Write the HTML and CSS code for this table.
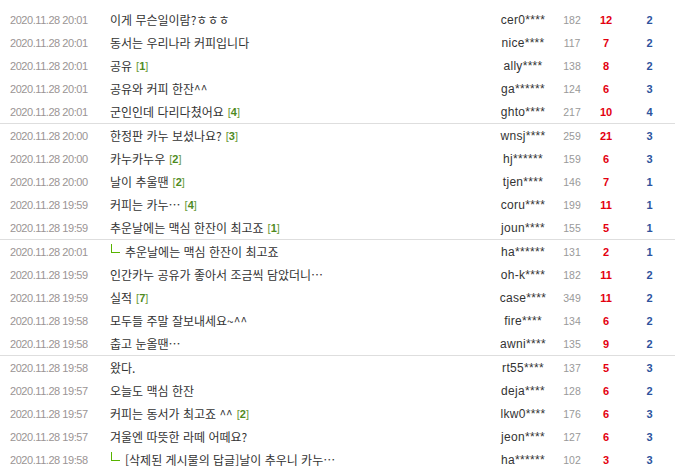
FILE: index.html
```html
<!DOCTYPE html>
<html lang="ko">
<head>
<meta charset="utf-8">
<link rel="stylesheet" href="styles.css">
</head>
<body>
<div class="list">
  <div class="group">
    <div class="row"><span class="date">2020.11.28 20:01</span><span class="title">이게 무슨일이람?ㅎㅎㅎ</span><span class="nick">cer0****</span><span class="hit">182</span><span class="red">12</span><span class="blue">2</span></div>
    <div class="row"><span class="date">2020.11.28 20:01</span><span class="title">동서는 우리나라 커피입니다</span><span class="nick">nice****</span><span class="hit">117</span><span class="red">7</span><span class="blue">2</span></div>
    <div class="row"><span class="date">2020.11.28 20:01</span><span class="title">공유 <span class="cmt">[<b>1</b>]</span></span><span class="nick">ally****</span><span class="hit">138</span><span class="red">8</span><span class="blue">2</span></div>
    <div class="row"><span class="date">2020.11.28 20:01</span><span class="title">공유와 커피 한잔^^</span><span class="nick">ga******</span><span class="hit">124</span><span class="red">6</span><span class="blue">3</span></div>
    <div class="row"><span class="date">2020.11.28 20:01</span><span class="title">군인인데 다리다쳤어요 <span class="cmt">[<b>4</b>]</span></span><span class="nick">ghto****</span><span class="hit">217</span><span class="red">10</span><span class="blue">4</span></div>
  </div>
  <div class="group">
    <div class="row"><span class="date">2020.11.28 20:00</span><span class="title">한정판 카누 보셨나요? <span class="cmt">[<b>3</b>]</span></span><span class="nick">wnsj****</span><span class="hit">259</span><span class="red">21</span><span class="blue">3</span></div>
    <div class="row"><span class="date">2020.11.28 20:00</span><span class="title">카누카누우 <span class="cmt">[<b>2</b>]</span></span><span class="nick">hj******</span><span class="hit">159</span><span class="red">6</span><span class="blue">3</span></div>
    <div class="row"><span class="date">2020.11.28 20:00</span><span class="title">날이 추울땐 <span class="cmt">[<b>2</b>]</span></span><span class="nick">tjen****</span><span class="hit">146</span><span class="red">7</span><span class="blue">1</span></div>
    <div class="row"><span class="date">2020.11.28 19:59</span><span class="title">커피는 카누… <span class="cmt">[<b>4</b>]</span></span><span class="nick">coru****</span><span class="hit">199</span><span class="red">11</span><span class="blue">1</span></div>
    <div class="row"><span class="date">2020.11.28 19:59</span><span class="title">추운날에는 맥심 한잔이 최고죠 <span class="cmt">[<b>1</b>]</span></span><span class="nick">joun****</span><span class="hit">155</span><span class="red">5</span><span class="blue">1</span></div>
  </div>
  <div class="group">
    <div class="row"><span class="date">2020.11.28 20:01</span><span class="title"><i class="re"></i>추운날에는 맥심 한잔이 최고죠</span><span class="nick">ha******</span><span class="hit">131</span><span class="red">2</span><span class="blue">1</span></div>
    <div class="row"><span class="date">2020.11.28 19:59</span><span class="title">인간카누 공유가 좋아서 조금씩 담았더니…</span><span class="nick">oh-k****</span><span class="hit">182</span><span class="red">11</span><span class="blue">2</span></div>
    <div class="row"><span class="date">2020.11.28 19:59</span><span class="title">실적 <span class="cmt">[<b>7</b>]</span></span><span class="nick">case****</span><span class="hit">349</span><span class="red">11</span><span class="blue">2</span></div>
    <div class="row"><span class="date">2020.11.28 19:58</span><span class="title">모두들 주말 잘보내세요~^^</span><span class="nick">fire****</span><span class="hit">134</span><span class="red">6</span><span class="blue">2</span></div>
    <div class="row"><span class="date">2020.11.28 19:58</span><span class="title">춥고 눈올땐…</span><span class="nick">awni****</span><span class="hit">135</span><span class="red">9</span><span class="blue">2</span></div>
  </div>
  <div class="group">
    <div class="row"><span class="date">2020.11.28 19:58</span><span class="title">왔다.</span><span class="nick">rt55****</span><span class="hit">137</span><span class="red">5</span><span class="blue">3</span></div>
    <div class="row"><span class="date">2020.11.28 19:57</span><span class="title">오늘도 맥심 한잔</span><span class="nick">deja****</span><span class="hit">128</span><span class="red">6</span><span class="blue">2</span></div>
    <div class="row"><span class="date">2020.11.28 19:57</span><span class="title">커피는 동서가 최고죠 ^^ <span class="cmt">[<b>2</b>]</span></span><span class="nick">lkw0****</span><span class="hit">176</span><span class="red">6</span><span class="blue">3</span></div>
    <div class="row"><span class="date">2020.11.28 19:57</span><span class="title">겨울엔 따뜻한 라떼 어떼요?</span><span class="nick">jeon****</span><span class="hit">127</span><span class="red">6</span><span class="blue">3</span></div>
    <div class="row"><span class="date">2020.11.28 19:58</span><span class="title"><i class="re"></i>[삭제된 게시물의 답글]날이 추우니 카누…</span><span class="nick">ha******</span><span class="hit">102</span><span class="red">3</span><span class="blue">3</span></div>
  </div>
</div>
</body>
</html>
```

FILE: styles.css
```css
html, body {
  margin: 0;
  padding: 0;
  background: #fff;
}
body {
  font-family: "Liberation Sans", Arial, "Noto Sans CJK KR", sans-serif;
  color: #333;
}
.list {
  width: 675px;
  padding-top: 8px;
}
.group {
  border-bottom: 1px solid #dedede;
}
.group:last-child {
  border-bottom: none;
}
.row {
  display: grid;
  grid-template-columns: 110px 380px 66px 32px 36px 51px;
  height: 23px;
  align-items: center;
  white-space: nowrap;
}
.date {
  padding-left: 10px;
  font-size: 11px;
  letter-spacing: -0.45px;
  color: #9a9494;
}
.title {
  font-family: "Noto Sans CJK KR", sans-serif;
  font-size: 12px;
  color: #333;
  display: flex;
  align-items: center;
}
.cmt {
  font-family: "Liberation Sans", Arial, sans-serif;
  font-size: 11px;
  color: #6a9a3a;
  margin-left: 4px;
}
.cmt b {
  color: #4e8a1e;
  font-weight: bold;
}
.re {
  display: inline-block;
  width: 8px;
  height: 8px;
  border-left: 1px solid #58b400;
  border-bottom: 1px solid #58b400;
  margin: -6px 5px 0 1px;
}
.nick {
  text-align: center;
  font-size: 12px;
  letter-spacing: 0.3px;
  color: #333;
}
.hit {
  text-align: center;
  font-size: 10.5px;
  color: #999;
}
.red {
  text-align: center;
  font-size: 11px;
  font-weight: bold;
  color: #e3000f;
}
.blue {
  text-align: center;
  font-size: 11px;
  font-weight: bold;
  color: #2d539e;
}
```
